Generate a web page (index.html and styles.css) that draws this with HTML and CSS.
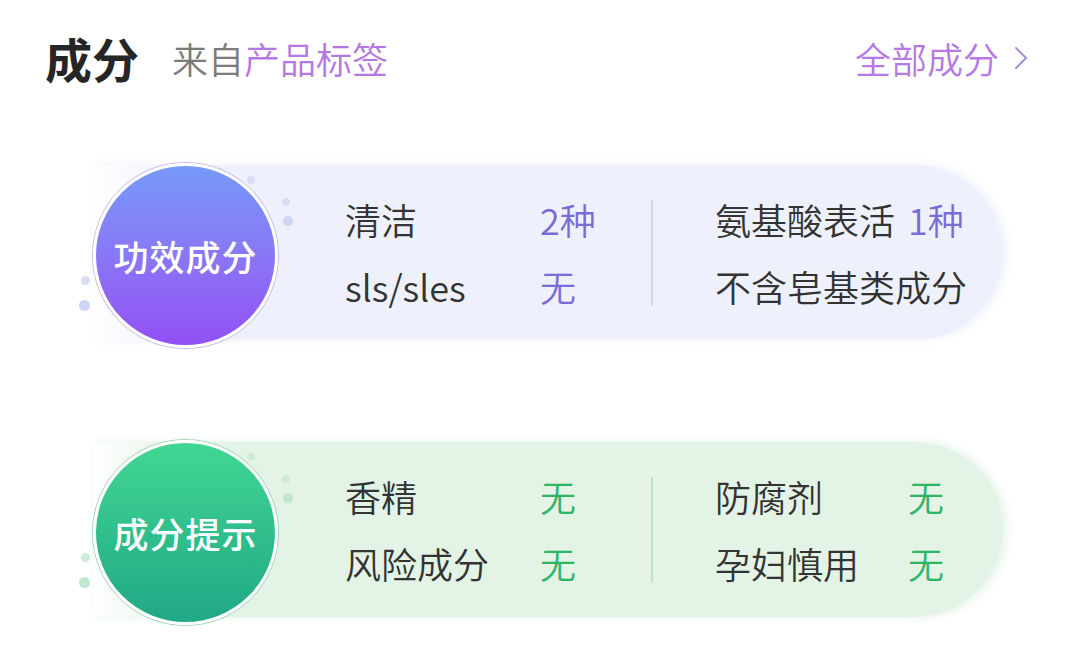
FILE: index.html
```html
<!DOCTYPE html>
<html lang="zh-CN">
<head>
<meta charset="utf-8">
<title>成分</title>
<link rel="stylesheet" href="styles.css">
</head>
<body>
<div class="page">
  <header class="header">
    <div class="title-group">
      <h1 class="title">成分</h1>
      <span class="subtitle">来自<span class="accent">产品标签</span></span>
    </div>
    <a class="more">全部成分<svg class="chev" width="14" height="24" viewBox="0 0 14 24"><polyline points="2,2 12,12 2,22" fill="none" stroke="#a58ad6" stroke-width="1.8" stroke-linecap="round" stroke-linejoin="round"/></svg></a>
  </header>

  <section class="card card-blue">
    <div class="badge badge-blue">
      <span class="dot d1"></span><span class="dot d2"></span><span class="dot d3"></span><span class="dot d4"></span><span class="dot d5"></span>
      <span class="badge-text">功效成分</span>
    </div>
    <div class="card-body">
      <div class="group group-left">
        <span class="label">清洁</span><span class="value v-purple">2种</span>
        <span class="label">sls/sles</span><span class="value v-purple">无</span>
      </div>
      <div class="divider div-blue"></div>
      <div class="group group-right">
        <span class="label">氨基酸表活</span><span class="value v-purple">1种</span>
        <span class="label span2">不含皂基类成分</span>
      </div>
    </div>
  </section>

  <section class="card card-green">
    <div class="badge badge-green">
      <span class="dot d1"></span><span class="dot d2"></span><span class="dot d3"></span><span class="dot d4"></span><span class="dot d5"></span>
      <span class="badge-text">成分提示</span>
    </div>
    <div class="card-body">
      <div class="group group-left">
        <span class="label">香精</span><span class="value v-green">无</span>
        <span class="label">风险成分</span><span class="value v-green">无</span>
      </div>
      <div class="divider div-green"></div>
      <div class="group group-right">
        <span class="label">防腐剂</span><span class="value v-green">无</span>
        <span class="label">孕妇慎用</span><span class="value v-green">无</span>
      </div>
    </div>
  </section>
</div>
</body>
</html>
```

FILE: styles.css
```css
* { box-sizing: border-box; }
html, body { margin: 0; padding: 0; background: #ffffff; }
body {
  font-family: "Noto Sans CJK SC", "Noto Sans", sans-serif;
  color: #333333;
}
.page {
  width: 1080px;
  height: 651px;
  overflow: hidden;
  padding-top: 32px;
}
.header {
  display: flex;
  align-items: center;
  justify-content: space-between;
  padding: 0 52px 0 45px;
  height: 52px;
}
.title-group {
  display: flex;
  align-items: center;
  gap: 33px;
}
.title {
  margin: 0;
  font-size: 47px;
  line-height: 52px;
  font-weight: 700;
  color: #262626;
}
.subtitle {
  font-size: 36px;
  line-height: 52px;
  font-weight: 350;
  color: #7b7b7b;
}
.accent { color: #b478e2; }
.more {
  display: flex;
  align-items: center;
  gap: 15px;
  font-size: 36px;
  line-height: 52px;
  font-weight: 350;
  color: #b57ae3;
}
.chev { display: block; }

.card {
  position: relative;
  display: flex;
  align-items: center;
  height: 175px;
  width: 910px;
  margin-left: 93px;
  border-radius: 0 88px 88px 0;
}
.card-blue {
  margin-top: 81px;
  background: linear-gradient(90deg, rgba(238,241,252,0) 0, #eef1fc 90px, #eef1fc 100%);
  box-shadow: 4px 0 8px rgba(238,241,252,0.9);
}
.card-green {
  margin-top: 102px;
  background: linear-gradient(90deg, rgba(226,243,229,0) 0, #e3f3e6 90px, #e3f3e6 100%);
  box-shadow: 4px 0 8px rgba(226,243,229,0.9);
}
.badge {
  position: relative;
  flex: 0 0 185px;
  width: 185px;
  height: 185px;
  margin-top: 6px;
  border-radius: 50%;
  border: 3px solid #ffffff;
  display: flex;
  align-items: center;
  justify-content: center;
}
.badge-blue {
  background: linear-gradient(180deg, #7699f9 0%, #8a77f6 50%, #9250f4 100%);
  box-shadow: 0 0 0 1px #c6b9ec;
}
.badge-green {
  background: linear-gradient(180deg, #42d693 0%, #30bf8b 50%, #21a886 100%);
  box-shadow: 0 0 0 1px #9fd6b4;
}
.badge-text {
  color: #ffffff;
  font-size: 35px;
  line-height: 40px;
  font-weight: 500;
  letter-spacing: 1px;
}
.dot {
  position: absolute;
  border-radius: 50%;
}
.badge-blue .dot { background: #d9def6; }
.badge-green .dot { background: #cdebd8; }
.d1 { width: 8px; height: 8px; left: 151px; top: 10px; }
.d2 { width: 8px; height: 8px; left: 186px; top: 32px; }
.d3 { width: 10px; height: 10px; left: 187px; top: 50px; }
.d4 { width: 9px; height: 9px; left: -15px; top: 110px; }
.d5 { width: 11px; height: 11px; left: -17px; top: 134px; }
.badge-blue .d3, .badge-blue .d5 { background: #cdd5f4; }
.badge-green .d3, .badge-green .d5 { background: #c2e7d1; }

.card-body {
  display: flex;
  align-items: center;
  margin-left: 67px;
  margin-top: 0;
}
.group {
  display: grid;
  row-gap: 27px;
  font-size: 36px;
  line-height: 40px;
  font-weight: 350;
}
.group-left { grid-template-columns: 195px 111px; }
.group-right { grid-template-columns: 193px auto; margin-left: 62px; }
.span2 { grid-column: 1 / span 2; }
.label { color: #333333; white-space: nowrap; }
.value { white-space: nowrap; }
.v-purple { color: #7a6cd6; }
.v-green { color: #2db465; }
.divider {
  width: 2px;
  height: 106px;
  border-radius: 1px;
}
.div-blue { background: #cdd6f1; }
.div-green { background: #bfe2cb; }
```
